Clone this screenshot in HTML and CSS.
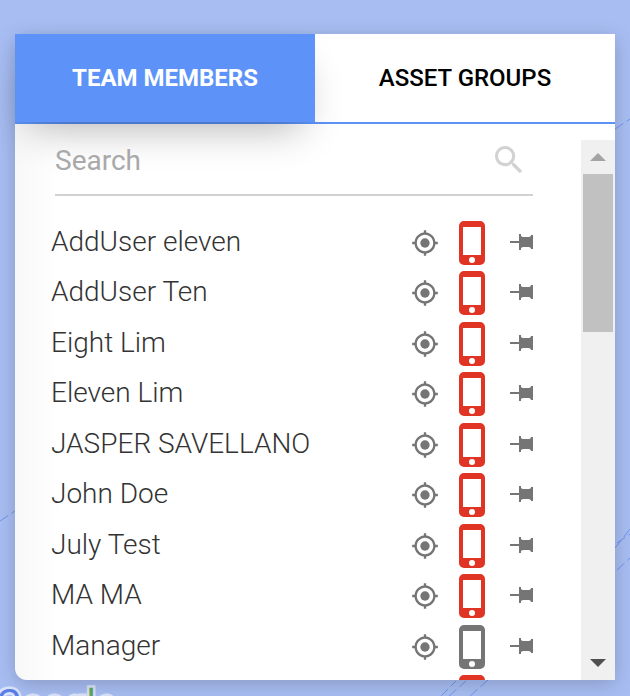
FILE: index.html
```html
<!DOCTYPE html>
<html lang="en">
<head>
    <meta charset="UTF-8">
    <meta name="viewport" content="width=device-width, initial-scale=1.0">
    <title>Team Members</title>
    <link rel="stylesheet" href="styles.css">
</head>
<body>
    <!-- Map behind the panel -->
    <div class="map">
        <svg class="map-lines" viewBox="0 0 630 696" preserveAspectRatio="none" aria-hidden="true">
            <path d="M615 129L630 119M0 521L15 511M615 548L630 529M617 543L630 534M617 570L630 558M441 696L456 681M449 696L466 681M470 696L488 680"/>
        </svg>
        <div class="map-logo"><span class="blue">G</span><span class="red">o</span><span class="yellow">o</span><span class="blue">g</span><span class="green">l</span><span class="red">e</span></div>
    </div>

    <main class="panel">
        <div class="tabs" role="tablist">
            <button type="button" class="tab active" role="tab" aria-selected="true">TEAM MEMBERS</button>
            <button type="button" class="tab" role="tab" aria-selected="false">ASSET GROUPS</button>
        </div>
        <div class="panel-body">
            <div class="content">
                <form class="search">
                    <input type="text" id="search" placeholder="Search" aria-label="Search">
                    <button type="submit" aria-label="Submit search">
                        <svg viewBox="3 3 18 18"><path d="M15.5 14h-.79l-.28-.27C15.41 12.59 16 11.11 16 9.5 16 5.91 13.09 3 9.5 3S3 5.91 3 9.5 5.91 16 9.5 16c1.61 0 3.09-.59 4.23-1.57l.27.28v.79l5 4.99L20.49 19l-4.99-5zm-6 0C7.01 14 5 11.99 5 9.5S7.01 5 9.5 5 14 7.01 14 9.5 11.99 14 9.5 14z"/></svg>
                    </button>
                </form>
                <ul class="members" id="members"></ul>
            </div>
            <div class="scrollbar">
                <button type="button" id="scrollUp" class="arrow up" aria-label="Scroll up"></button>
                <div class="track"><div class="thumb"></div></div>
                <button type="button" id="scrollDown" class="arrow down" aria-label="Scroll down"></button>
            </div>
        </div>
    </main>

    <template id="memberRow">
        <li class="member">
            <span class="name"></span>
            <button type="button" class="locate" aria-label="Locate">
                <svg viewBox="0 0 24 24"><circle cx="12" cy="12" r="4"/><path d="M20.94 11c-.46-4.17-3.77-7.48-7.94-7.94V1h-2v2.06C6.83 3.52 3.52 6.83 3.06 11H1v2h2.06c.46 4.17 3.77 7.48 7.94 7.94V23h2v-2.06c4.17-.46 7.48-3.77 7.94-7.94H23v-2h-2.06zM12 19c-3.87 0-7-3.13-7-7s3.13-7 7-7 7 3.13 7 7-3.13 7-7 7z"/></svg>
            </button>
            <button type="button" class="phone" aria-label="Phone">
                <svg viewBox="0 0 26 44"><path fill-rule="evenodd" d="M5 0h16a5 5 0 0 1 5 5v34a5 5 0 0 1-5 5H5a5 5 0 0 1-5-5V5a5 5 0 0 1 5-5zM4 6v28h18V6zM13 36a3 3 0 1 0 0 6a3 3 0 1 0 0-6z"/></svg>
            </button>
            <button type="button" class="pin" aria-label="Pin">
                <svg viewBox="0 0 23 16"><path d="M0 7h9V0h2v2c1 1 2 1 3 1h5c1 0 2-1 2-2h2v14h-2c0-1-1-2-2-2h-5c-1 0-2 0-3 1v2H9V9H0z"/></svg>
            </button>
        </li>
    </template>

    <script>
        document.addEventListener('DOMContentLoaded', function() {
            const list = document.getElementById('members');
            const template = document.getElementById('memberRow');
            const members = [
                { name: 'AddUser eleven' },
                { name: 'AddUser Ten' },
                { name: 'Eight Lim' },
                { name: 'Eleven Lim' },
                { name: 'JASPER SAVELLANO' },
                { name: 'John Doe' },
                { name: 'July Test' },
                { name: 'MA MA' },
                { name: 'Manager', offline: true },
                { name: '' }
            ];

            members.forEach(function(member) {
                const row = template.content.cloneNode(true);
                row.querySelector('.name').textContent = member.name;
                if (member.offline) {
                    row.querySelector('.phone').classList.add('offline');
                }
                list.appendChild(row);
            });

            document.getElementById('scrollUp').addEventListener('click', function() {
                list.scrollTop -= 50;
            });
            document.getElementById('scrollDown').addEventListener('click', function() {
                list.scrollTop += 50;
            });
        });
    </script>
</body>
</html>
```

FILE: styles.css
```css
* {
    box-sizing: border-box;
}

body {
    margin: 0;
    height: 100vh;
    padding: 34px 15px 16px;
    font-family: Roboto, sans-serif;
    background-color: #a8bef3;
    overflow: hidden;
}

button {
    padding: 0;
    border: none;
    background: none;
    font-family: inherit;
    color: inherit;
    cursor: pointer;
}

svg {
    display: block;
    fill: currentColor;
}

/* Map */
.map {
    position: absolute;
    inset: 0;
    overflow: hidden;
}

.map-lines {
    width: 100%;
    height: 100%;
    fill: none;
    stroke: #7094f0;
    stroke-width: 1;
    stroke-dasharray: 10 4;
}

.map-logo {
    position: absolute;
    left: -4px;
    bottom: -30px;
    font-size: 38px;
    line-height: 44px;
    -webkit-text-stroke: 5px #dbe4fa;
    paint-order: stroke fill;
}

.blue { color: #5a80e8; }
.red { color: #e06a62; }
.yellow { color: #e8c35a; }
.green { color: #5fa861; }

/* Panel */
.panel {
    position: relative;
    display: flex;
    flex-direction: column;
    height: 100%;
    background: linear-gradient(to right, #f8f8f8, #fff 45px);
    border-bottom-left-radius: 12px;
    box-shadow: 0 4px 20px rgba(0, 0, 0, 0.2);
}

.tabs {
    display: flex;
    flex: none;
    height: 90px;
    background-color: #fff;
    border-bottom: 2px solid #5d93f8;
}

.tab {
    flex: 1;
    font-size: 24px;
    font-weight: 500;
    color: #000;
}

.tab.active {
    font-weight: 700;
    color: #fff;
    background-color: #5d93f8;
    box-shadow: 0 20px 40px -14px rgba(0, 0, 0, 0.3);
}

.panel-body {
    display: flex;
    flex: 1;
    min-height: 0;
    padding-top: 16px;
}

.content {
    display: flex;
    flex: 1;
    flex-direction: column;
    min-width: 0;
    padding: 0 48px 0 36px;
}

/* Search */
.search {
    display: flex;
    flex: none;
    align-items: flex-start;
    height: 56px;
    margin-left: 4px;
    padding-right: 10px;
    border-bottom: 2px solid #d2d2d2;
}

.search input {
    flex: 1;
    min-width: 0;
    height: 40px;
    padding: 0;
    border: none;
    outline: none;
    background: none;
    font-family: inherit;
    font-size: 28px;
    color: #333;
}

.search input::placeholder {
    color: #a9a9a9;
}

.search button {
    padding-top: 6px;
    color: #d2d2d2;
}

.search svg {
    width: 28px;
    height: 28px;
}

/* Members */
.members {
    flex: 1;
    min-height: 0;
    margin: 0;
    padding: 22px 0 0;
    list-style: none;
    overflow: hidden;
}

.member {
    display: flex;
    align-items: center;
    height: 50px;
    color: #757575;
}

.member:nth-child(even) {
    margin-bottom: 1px;
}

.name {
    flex: 1;
    padding-bottom: 4px;
    font-size: 28px;
    font-weight: 300;
    color: #333;
}

.locate svg {
    width: 28px;
    height: 28px;
}

.phone {
    margin: 0 25px 0 20px;
    color: #e03424;
}

.phone.offline {
    color: #757575;
}

.phone svg {
    width: 26px;
    height: 44px;
}

.pin {
    padding-bottom: 3px;
}

.pin svg {
    width: 23px;
    height: 16px;
}

/* Scrollbar */
.scrollbar {
    display: flex;
    flex: none;
    flex-direction: column;
    width: 34px;
    background-color: #f0f0f0;
}

.arrow {
    height: 34px;
}

.arrow::before {
    content: "";
    display: block;
    width: 16px;
    height: 8px;
    margin: 0 auto;
    background-color: #a3a3a3;
    clip-path: polygon(50% 0, 100% 100%, 0 100%);
}

.arrow.down::before {
    background-color: #505050;
    clip-path: polygon(0 0, 100% 0, 50% 100%);
}

.track {
    flex: 1;
    padding: 0 2px;
}

.thumb {
    height: 158px;
    background-color: #c1c1c1;
}
```
